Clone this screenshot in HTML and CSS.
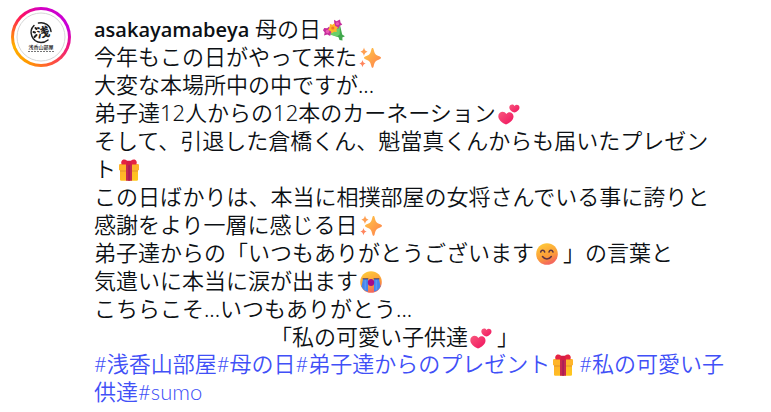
FILE: index.html
```
<!DOCTYPE html>
<html lang="ja">
<head>
    <meta charset="UTF-8">
    <meta name="viewport" content="width=device-width, initial-scale=1.0">
    <title>asakayamabeya</title>
    <link rel="stylesheet" href="styles.css">
</head>
<body>
    <!-- 絵文字 -->
    <svg class="defs" aria-hidden="true">
        <defs>
            <linearGradient id="gold" x1="0" y1="0" x2="1" y2="1">
                <stop offset="0" stop-color="#ffcb45"/>
                <stop offset="1" stop-color="#ff7d4d"/>
            </linearGradient>
            <linearGradient id="face" x1="0" y1="0" x2="0.4" y2="1">
                <stop offset="0" stop-color="#ffd23c"/>
                <stop offset="0.7" stop-color="#fb9a38"/>
                <stop offset="1" stop-color="#f4695c"/>
            </linearGradient>
            <linearGradient id="pink" x1="0" y1="0" x2="1" y2="1">
                <stop offset="0" stop-color="#f8587d"/>
                <stop offset="1" stop-color="#f0125e"/>
            </linearGradient>
            <linearGradient id="box" x1="0" y1="0" x2="1" y2="1">
                <stop offset="0" stop-color="#ffae2d"/>
                <stop offset="1" stop-color="#ffc91c"/>
            </linearGradient>
        </defs>
        <symbol id="sparkles" viewBox="0 0 22 22">
            <path fill="url(#gold)" d="M13.500 1c.7 0 1 .7 1.200 1.700.9 4 1.800 5.200 5.500 6.500 1 .4 1.800.8 1.800 1.600s-.8 1.200-1.800 1.600c-3.700 1.300-4.600 2.500-5.500 6.500-.2 1-.5 1.800-1.200 1.800s-1-.8-1.200-1.800c-.9-4-1.800-5.200-5.500-6.500-1-.4-1.800-.8-1.800-1.600s.8-1.200 1.800-1.600c3.700-1.300 4.600-2.500 5.500-6.500.2-1 .5-1.700 1.200-1.700z"/>
            <path fill="#ff9f51" d="M5 .5c.8 2.800 1.200 3.300 3.600 4.200C6.200 5.600 5.800 6.100 5 9 4.200 6.100 3.800 5.600 1.400 4.700 3.800 3.800 4.200 3.300 5 .5z"/>
            <path fill="#ff855d" d="M3.500 13c.7 2.400 1.100 2.800 3.200 3.600-2.100.8-2.500 1.200-3.200 3.600-.7-2.400-1.100-2.800-3.200-3.600 2.100-.8 2.500-1.200 3.200-3.600z"/>
        </symbol>
        <symbol id="hearts" viewBox="0 0 22 22">
            <path fill="url(#pink)" d="M8 21.500C3.600 19.700.3 16.500.3 13.200c0-4.800 5.900-6.100 8-2.300 2.800-3.300 7.600-1.200 7.200 3-.3 3.400-4 6.100-7.500 7.600z"/>
            <path fill="url(#pink)" d="M16.300 9.600c-2.900-1.200-5-3.100-5-5.200 0-3.100 3.800-4 5.200-1.500 1.900-2.200 5.300-.7 5 2-.2 2.200-2.800 3.900-5.200 4.700z"/>
        </symbol>
        <symbol id="gift" viewBox="0 0 22 22">
            <path fill="url(#box)" d="M2 9h18v11.500a1.200 1.200 0 0 1-1.200 1.200H3.200A1.200 1.200 0 0 1 2 20.500z"/>
            <rect x="1" y="5" width="20" height="6.500" rx="1.200" fill="#ffb52a"/>
            <path fill="#e0952a" d="M2 11.500h18v1H2z"/>
            <path fill="#c52850" d="M8 5h6v16.700H8z"/>
            <path fill="#a91e56" d="M10.200 6h1.700v15.700h-1.700z"/>
            <path fill="#e52443" d="M10 5.500H3.700C2.500 3.300 3.600.6 6.200.6 8.300.6 9.500 2 11 3.500 12.500 2 13.700.6 15.800.6c2.600 0 3.700 2.700 2.500 4.900H12z"/>
            <rect x="8.500" y="1.700" width="5" height="4.600" rx="1.200" fill="#d51d45"/>
        </symbol>
        <symbol id="bouquet" viewBox="0 0 22 22">
            <path fill="#41a84c" d="M6 14.500 17 6l2.200 9.500 2.700 1.700-2.600 1.300.2 3-3-.6-1-2.600z"/>
            <path fill="#6bcf69" d="M5 15 17 6l-.3 9.500-3 2.200z"/>
            <g fill="#c62e9c">
                <path d="m11 .8 2.500 1.500L17 .5l.5 3 1.800 2-2.700 1.500L15 10l-2.600-2.300L9.500 7l1.800-2.500z"/>
                <path d="m1.200 9 3 .3 2-1.700 1.200 2.800 3 1.600-2.600 1.900-.6 3-2.900-1.300L1 16.500l.7-3L0 11.200z"/>
            </g>
            <circle cx="14.500" cy="4.700" r="1.600" fill="#ed59b5"/>
            <circle cx="4.500" cy="12.500" r="1.700" fill="#ed59b5"/>
            <path fill="#ffb52b" d="m7 5 2.500.8 2-1.600.8 2.700 2.700 1.300-1.500 2.100.2 2.700-2.700-.2-2.200 1.700-1.300-2.500L5 11l1.500-2.500z"/>
            <circle cx="9.800" cy="9" r="1.600" fill="#ee7827"/>
        </symbol>
        <symbol id="smile" viewBox="0 0 22 22">
            <circle cx="11" cy="11" r="10.800" fill="url(#face)"/>
            <g fill="none" stroke="#5d3343" stroke-width="1.500" stroke-linecap="round">
                <path d="M4.700 9c.6-2.500 3.300-2.500 4 0M13 9c.6-2.500 3.300-2.500 4 0M6.500 13.500c2.200 3.200 6.600 3.200 8.800 0"/>
            </g>
        </symbol>
        <symbol id="cry" viewBox="0 0 22 22">
            <circle cx="11" cy="11" r="10.800" fill="url(#face)"/>
            <path fill="#4385ed" d="M3 8h5v12.800C5 20.300 2.500 18 1.500 15.500zM14 8h5l1.500 7.500c-1 2.500-3.500 4.800-6.500 5.300z"/>
            <path fill="#5d96f0" d="M4.500 9h1.700v10H4.500zM15.500 9h1.700v10h-1.700z"/>
            <path d="M3 7.800h5M14 7.800h5" stroke="#513860" stroke-width="1" stroke-linecap="round"/>
            <ellipse cx="11" cy="11.500" rx="3.200" ry="3.500" fill="#a20b8b"/>
        </symbol>
    </svg>

    <article class="post">
        <a class="avatar" href="#" aria-label="asakayamabeya">
            <svg viewBox="0 0 54 54" aria-hidden="true">
                <circle cx="27" cy="27" r="24" fill="#fff" stroke="#d6d6d6"/>
                <g fill="none" stroke="#202020" stroke-linecap="round">
                    <path d="M24.500 13A10 10 0 0 1 37 21.500" stroke-width="1.500"/>
                    <path d="M20 15.500A10 10 0 0 0 27 32.500Q31 32.500 34 30" stroke-width="1.500"/>
                    <path d="M21.500 18l1 1M19.500 22l1.500 .5M20.500 27l2-2" stroke-width="2"/>
                </g>
                <text class="crest" x="29" y="27" transform="rotate(-12 29 22)">浅</text>
                <text class="crest-name" x="27" y="39">浅香山部屋</text>
                <path d="M14 41.500h27" stroke="#777" stroke-dasharray="2 1"/>
            </svg>
        </a>
        <div class="caption">
            <p><a class="user" href="#">asakayamabeya</a> 母の日<svg class="emoji" role="img" aria-label="花束"><use href="#bouquet"/></svg></p>
            <p>今年もこの日がやって来た<svg class="emoji" role="img" aria-label="きらきら"><use href="#sparkles"/></svg></p>
            <p>大変な本場所中の中ですが...</p>
            <p>弟子達12人からの12本のカーネーション<svg class="emoji" role="img" aria-label="ハート"><use href="#hearts"/></svg></p>
            <p>そして、引退した倉橋くん、魁當真くんからも届いたプレゼント<svg class="emoji" role="img" aria-label="プレゼント"><use href="#gift"/></svg></p>
            <p>この日ばかりは、本当に相撲部屋の女将さんでいる事に誇りと<br>感謝をより一層に感じる日<svg class="emoji" role="img" aria-label="きらきら"><use href="#sparkles"/></svg></p>
            <p>弟子達からの「いつもありがとうございます<svg class="emoji" role="img" aria-label="笑顔"><use href="#smile"/></svg>」の言葉と</p>
            <p>気遣いに本当に涙が出ます<svg class="emoji" role="img" aria-label="大泣き"><use href="#cry"/></svg></p>
            <p>こちらこそ...いつもありがとう...</p>
            <p class="indent">「私の可愛い子供達<svg class="emoji" role="img" aria-label="ハート"><use href="#hearts"/></svg>」</p>
            <p class="tags"><a href="#">#浅香山部屋</a><a href="#">#母の日</a><a href="#">#弟子達からのプレゼント<svg class="emoji" role="img" aria-label="プレゼント"><use href="#gift"/></svg></a><a href="#">#私の可愛い子供達</a><a href="#">#sumo</a></p>
        </div>
    </article>
</body>
</html>
```

FILE: styles.css
```
* {
    box-sizing: border-box;
}
body {
    margin: 0;
    background-color: #fff;
    color: #0c1014;
    font-family: "Noto Sans", "Noto Sans CJK JP", sans-serif;
    font-size: 22px;
    line-height: 28px;
}
a {
    color: inherit;
    text-decoration: none;
}
.defs {
    position: absolute;
    width: 0;
    height: 0;
}
.post {
    display: flex;
    align-items: flex-start;
    gap: 23px;
    padding: 7px 45px 7px 11px;
}
.avatar {
    flex: none;
    width: 60px;
    height: 60px;
    padding: 3px;
    border-radius: 50%;
    background: conic-gradient(#d300c5, #c800d8 20%, #ee1680 30%, #ff5a35 45%, #ff9a00 58%, #ffb000 70%, #ff6a20 78%, #ff0f60 88%, #d300c5);
}
.avatar svg {
    display: block;
    width: 100%;
    height: 100%;
    border-radius: 50%;
    background-color: #fff;
}
.crest,
.crest-name {
    font-family: "Noto Sans CJK JP", sans-serif;
    text-anchor: middle;
    fill: #202020;
}
.crest {
    font-size: 13px;
    font-weight: 700;
}
.crest-name {
    font-size: 5px;
    font-weight: 500;
}
.caption {
    flex: 1;
    min-width: 0;
    padding-top: 7px;
}
.caption p {
    margin: 0;
    font-weight: 350;
}
.user {
    font-family: "Open Sans", sans-serif;
    font-size: 20px;
    font-weight: 600;
    line-height: 20px;
}
.emoji {
    width: 22px;
    height: 22px;
    margin: 0 5px 0 2px;
    vertical-align: -4px;
}
.caption .indent {
    padding-left: 176px;
}
.tags {
    color: #4150f7;
    font-family: Lato, "Noto Sans CJK JP", sans-serif;
}
```
